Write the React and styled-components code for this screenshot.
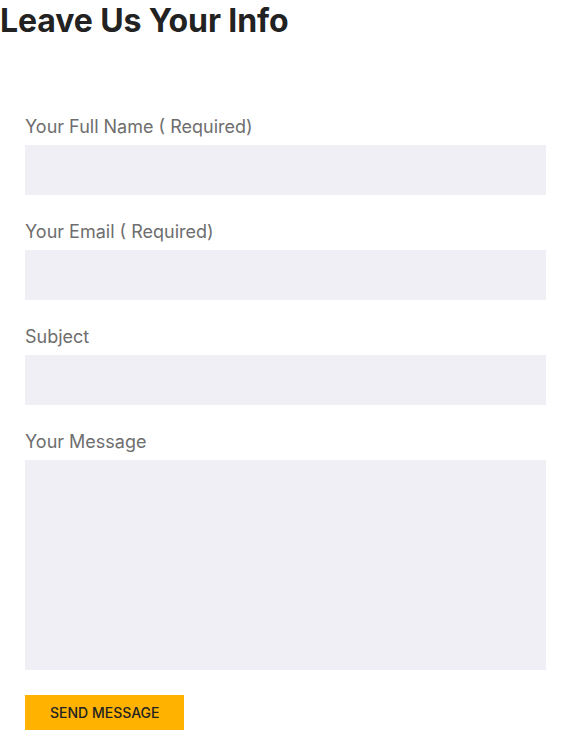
import React from "react";
import styled, { createGlobalStyle } from "styled-components";

const GlobalStyle = createGlobalStyle`
  body {
    margin: 0;
    background: #fff;
    font-family: Inter, "Liberation Sans", sans-serif;
  }
`;

const fields = [
  { id: "name", label: "Your Full Name ( Required)" },
  { id: "email", label: "Your Email ( Required)" },
  { id: "subject", label: "Subject" },
  { id: "message", label: "Your Message", multiline: true },
];

const App = () => {
  return (
    <Page>
      <GlobalStyle />
      <Title>Leave Us Your Info</Title>
      <Form onSubmit={(e) => e.preventDefault()}>
        {fields.map(({ id, label, multiline }) => (
          <Field key={id}>
            <Label htmlFor={id}>{label}</Label>
            {multiline ? <TextArea id={id} /> : <Input id={id} type="text" />}
          </Field>
        ))}
        <SendButton type="submit">Send Message</SendButton>
      </Form>
    </Page>
  );
};

export default App;

const Page = styled.div`
  width: 570px;
`;

const Title = styled.h2`
  margin: 0;
  font-size: 32px;
  line-height: 41px;
  font-weight: 700;
  color: #222;
  letter-spacing: -0.1px;
`;

const Form = styled.form`
  display: flex;
  flex-direction: column;
  gap: 23px;
  padding: 72px 24px 0 25px;
`;

const Field = styled.div`
  display: flex;
  flex-direction: column;
  gap: 5px;
`;

const Label = styled.label`
  font-size: 18px;
  line-height: 27px;
  color: #6e6e6e;
`;

const Input = styled.input`
  height: 50px;
  border: none;
  background: #f0eff5;
  outline: none;
  padding: 0 15px;
  box-sizing: border-box;
`;

const TextArea = styled.textarea`
  height: 210px;
  border: none;
  background: #f0eff5;
  outline: none;
  resize: none;
  padding: 15px;
  box-sizing: border-box;
`;

const SendButton = styled.button`
  align-self: flex-start;
  margin-top: 2px;
  height: 35px;
  padding: 0 25px;
  border: none;
  background: #ffb200;
  color: #222;
  font-family: Inter, "Liberation Sans", sans-serif;
  font-size: 14px;
  font-weight: 500;
  text-transform: uppercase;
  cursor: pointer;
`;
